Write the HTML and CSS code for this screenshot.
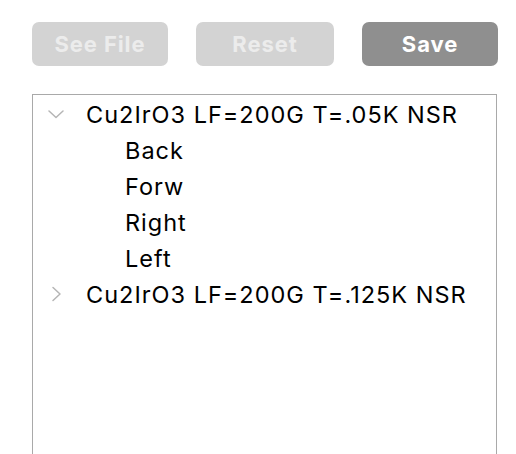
FILE: index.html
```html
<!DOCTYPE html>
<html>
<head>
<meta charset="utf-8">
<link rel="stylesheet" href="styles.css">
</head>
<body>
<div class="toolbar">
  <button class="btn btn-disabled btn-a">See File</button>
  <button class="btn btn-disabled btn-b">Reset</button>
  <button class="btn btn-primary btn-a">Save</button>
</div>
<div class="tree">
  <div class="row parent">
    <svg class="chev" width="16" height="16" viewBox="0 0 16 16"><path d="M1 5 L8 11.5 L15 5" fill="none" stroke="#b5b5b5" stroke-width="1.5" stroke-linecap="round" stroke-linejoin="round"/></svg>
    <span class="label">Cu2IrO3 LF=200G T=.05K NSR</span>
  </div>
  <div class="row child"><span class="label">Back</span></div>
  <div class="row child"><span class="label">Forw</span></div>
  <div class="row child"><span class="label">Right</span></div>
  <div class="row child"><span class="label">Left</span></div>
  <div class="row parent">
    <svg class="chev" width="16" height="16" viewBox="0 0 16 16"><path d="M5 1.5 L12 8 L5 14.5" fill="none" stroke="#b5b5b5" stroke-width="1.5" stroke-linecap="round" stroke-linejoin="round"/></svg>
    <span class="label">Cu2IrO3 LF=200G T=.125K NSR</span>
  </div>
</div>
</body>
</html>
```
FILE: styles.css
```css
html, body {
  margin: 0;
  padding: 0;
  background: #ffffff;
  overflow: hidden;
}
body {
  padding: 22px 0 0 32px;
  font-family: Inter, "Liberation Sans", sans-serif;
}
.toolbar {
  display: flex;
  gap: 28px;
  height: 44px;
}
.btn {
  height: 44px;
  border: none;
  border-radius: 7px;
  font-family: Inter, "Liberation Sans", sans-serif;
  font-weight: 700;
  font-size: 22px;
  letter-spacing: 0.9px;
  padding: 0;
}
.btn-a { width: 136px; }
.btn-b { width: 138px; }
.btn-disabled {
  background: #d3d3d3;
  color: #ececec;
}
.btn-primary {
  background: #8f8f8f;
  color: #ffffff;
}
.tree {
  margin-top: 28px;
  width: 463px;
  height: 358px;
  border: 1px solid #a9a9a9;
  border-bottom: none;
  padding-top: 1px;
}
.row {
  height: 36px;
  display: flex;
  align-items: center;
  font-size: 23.5px;
  letter-spacing: 1px;
  color: #000000;
}
.parent .chev {
  margin-left: 15px;
  margin-right: 22px;
}
.child .label {
  margin-left: 92px;
}
```
